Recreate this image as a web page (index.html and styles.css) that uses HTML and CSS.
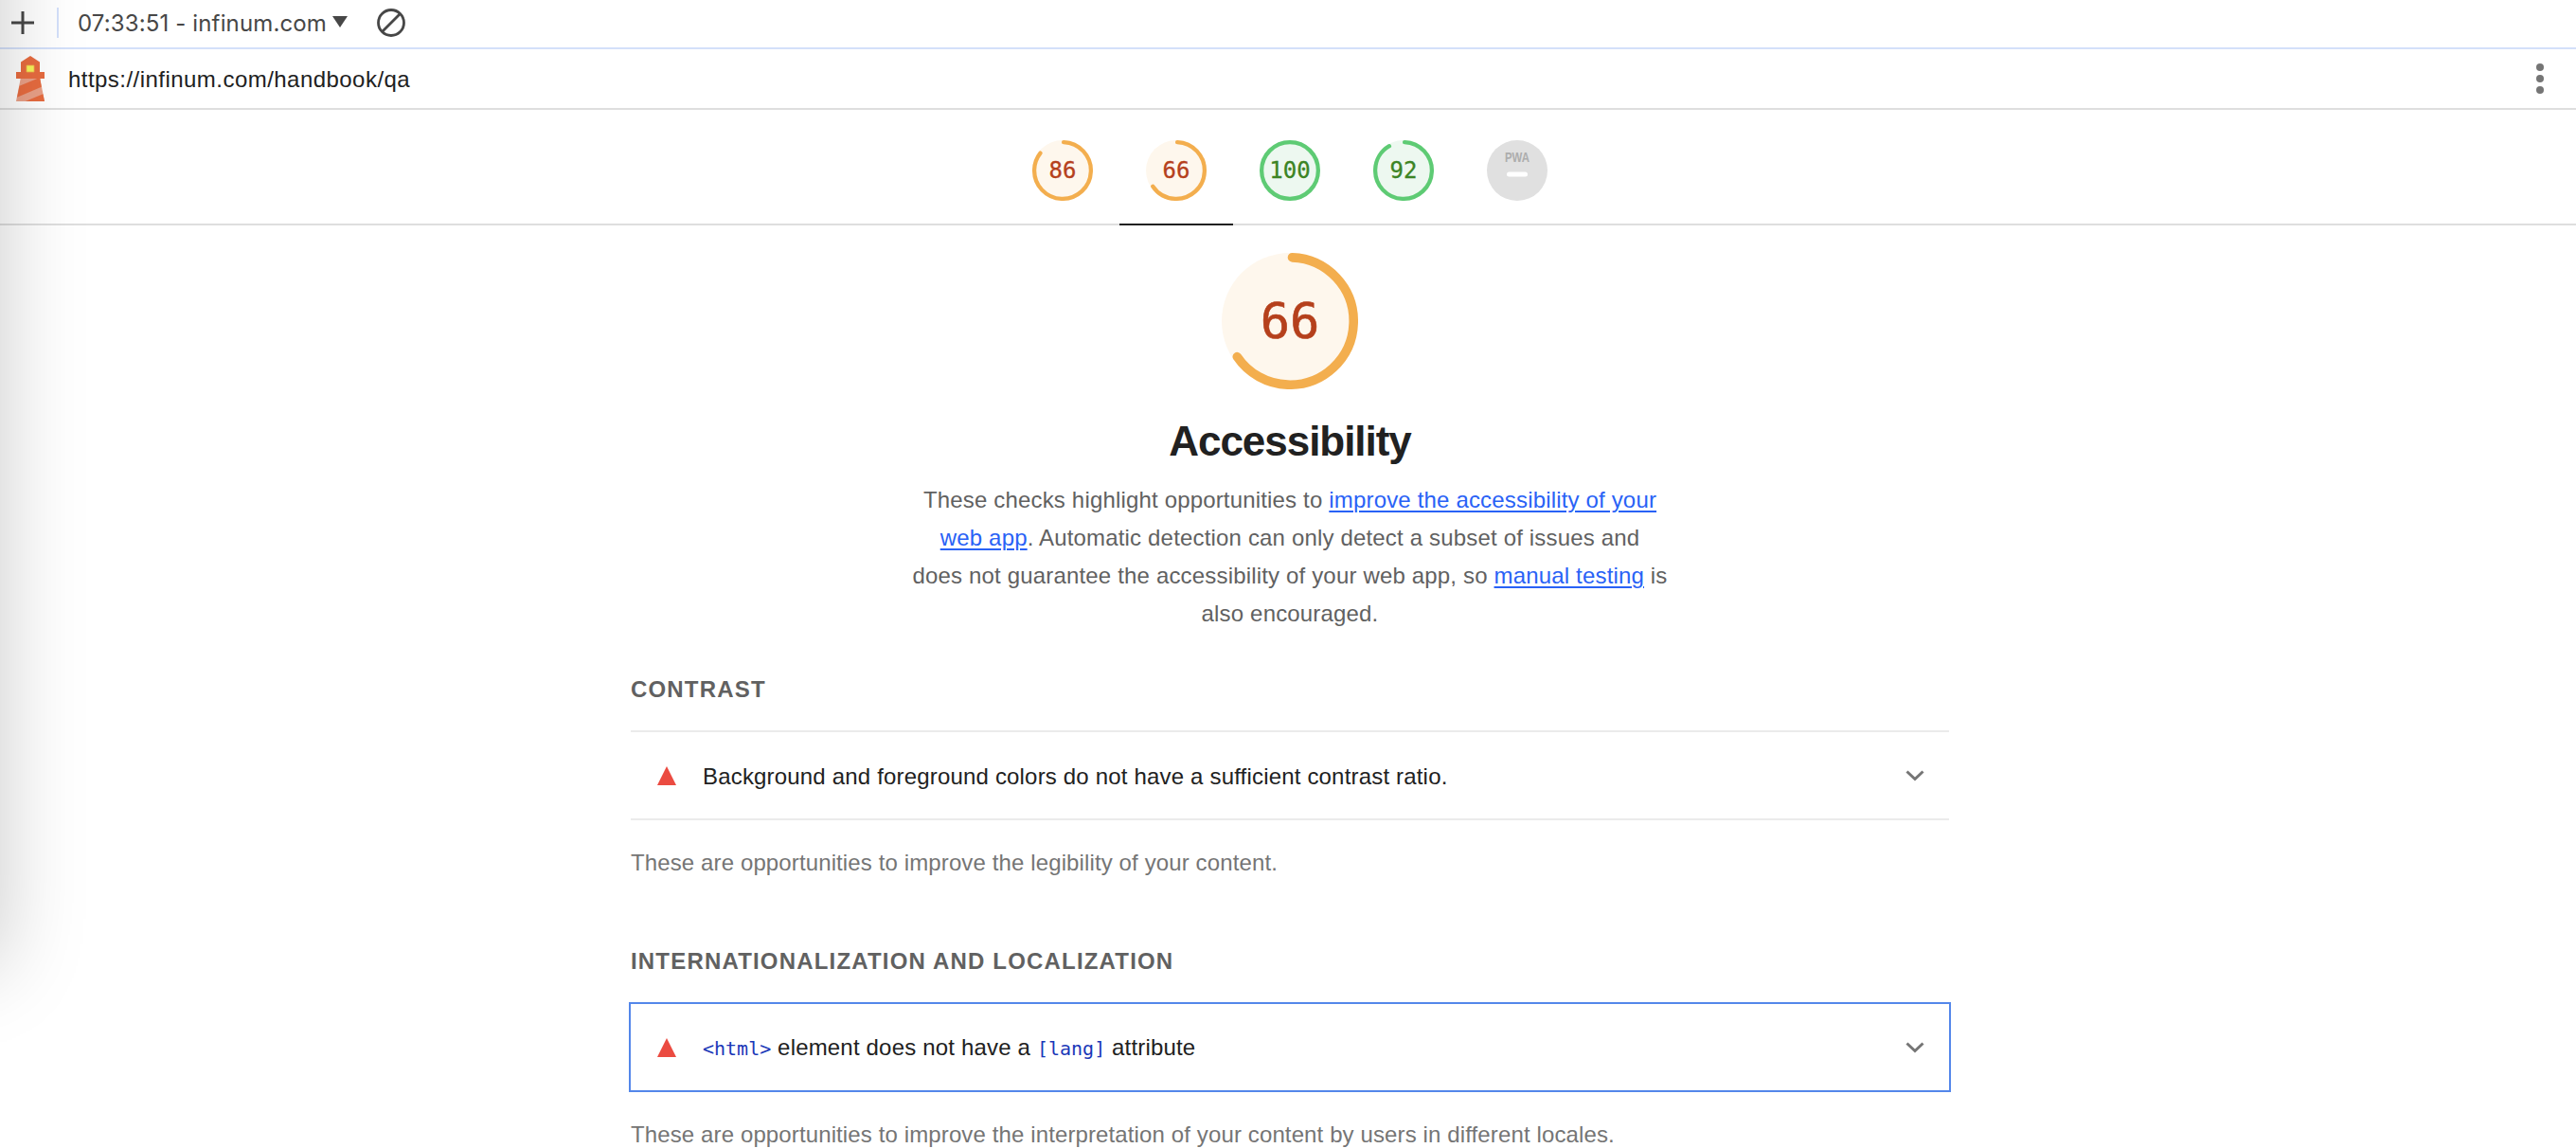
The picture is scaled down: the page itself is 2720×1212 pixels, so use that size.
FILE: index.html
```
<!DOCTYPE html>
<html lang="en">
<head>
  <meta charset="UTF-8">
  <meta name="viewport" content="width=device-width, initial-scale=1.0">
  <title>Lighthouse Report</title>
  <link rel="stylesheet" href="styles.css">
</head>
<body>

  <!-- Toolbar -->
  <div class="toolbar">
    <svg class="icon-plus" viewBox="0 0 24 24"><path d="M12 0v24M0 12h24" stroke="#474747" stroke-width="3"/></svg>
    <div class="divider"></div>
    <div class="report-select">07:33:51 - infinum.com</div>
    <svg class="icon-caret" viewBox="0 0 16 12"><path d="M0 0h16L8 12z" fill="#474747"/></svg>
    <svg class="icon-clear" viewBox="0 0 30 30">
      <circle cx="15" cy="15" r="13.5" fill="none" stroke="#474747" stroke-width="2.8"/>
      <path d="M5.5 24.5l19-19" stroke="#474747" stroke-width="2.8"/>
    </svg>
  </div>

  <!-- Topbar -->
  <div class="topbar">
    <svg class="logo" viewBox="0 0 30 48">
      <path d="M15 0l10 6.5V17H5V6.5z" fill="#e86c40"/>
      <path d="M0 17h30v7H0z" fill="#e86c40"/>
      <path d="M11 10h8v7h-8z" fill="#f7f55a" stroke="#f0b04a" stroke-width=".8"/>
      <path d="M4.7 24h20.6L30 48H0z" fill="#eaa188"/>
      <path d="M3.5 31.7L22.3 24h3l1.5 8.7L1 43.7z" fill="#e86c40"/>
      <path d="M9.7 48l18.7-7.7L30 48z" fill="#e86c40"/>
    </svg>
    <div class="url">https://infinum.com/handbook/qa</div>
    <svg class="menu" viewBox="0 0 8 32" fill="#757575">
      <circle cx="4" cy="4" r="4"/><circle cx="4" cy="16" r="4"/><circle cx="4" cy="28" r="4"/>
    </svg>
  </div>

  <!-- Score gauges -->
  <div class="scores">
    <div class="score average">
      <svg class="gauge" viewBox="0 0 120 120">
        <circle class="gauge-base" cx="60" cy="60" r="60"/>
        <circle class="gauge-arc" cx="60" cy="60" r="56" stroke-dasharray="298.6 352" transform="rotate(-87.9 60 60)"/>
      </svg>
      <span class="value">86</span>
    </div>
    <div class="score average active">
      <svg class="gauge" viewBox="0 0 120 120">
        <circle class="gauge-base" cx="60" cy="60" r="60"/>
        <circle class="gauge-arc" cx="60" cy="60" r="56" stroke-dasharray="228.2 352" transform="rotate(-87.9 60 60)"/>
      </svg>
      <span class="value">66</span>
    </div>
    <div class="score pass">
      <svg class="gauge" viewBox="0 0 120 120">
        <circle class="gauge-base" cx="60" cy="60" r="60"/>
        <circle class="gauge-arc" cx="60" cy="60" r="56"/>
      </svg>
      <span class="value">100</span>
    </div>
    <div class="score pass">
      <svg class="gauge" viewBox="0 0 120 120">
        <circle class="gauge-base" cx="60" cy="60" r="60"/>
        <circle class="gauge-arc" cx="60" cy="60" r="56" stroke-dasharray="319.7 352" transform="rotate(-87.9 60 60)"/>
      </svg>
      <span class="value">92</span>
    </div>
    <div class="score">
      <svg class="gauge" viewBox="0 0 64 64">
        <circle cx="32" cy="32" r="32" fill="#e0e0e0"/>
        <text class="pwa" x="19" y="23" textLength="26" lengthAdjust="spacingAndGlyphs">PWA</text>
        <rect x="21" y="33.5" width="22" height="5" rx="2.5" fill="#fff"/>
      </svg>
    </div>
  </div>

  <!-- Category -->
  <div class="container">
    <div class="category average">
      <div class="gauge-large">
        <svg class="gauge" viewBox="0 0 120 120">
          <circle class="gauge-base" cx="60" cy="60" r="60"/>
          <circle class="gauge-arc" cx="60" cy="60" r="56" stroke-dasharray="228.2 352" transform="rotate(-87.9 60 60)"/>
        </svg>
        <span class="value">66</span>
      </div>
      <h1>Accessibility</h1>
      <p class="description">These checks highlight opportunities to <a href="#">improve the accessibility of your web app</a>. Automatic detection can only detect a subset of issues and<br>does not guarantee the accessibility of your web app, so <a href="#">manual testing</a> is also encouraged.</p>
    </div>

    <div class="group">
      <h2>Contrast</h2>
      <div class="audit">
        <svg class="fail" viewBox="0 0 20 20"><path d="M10 0l10 20H0z" fill="#eb4b41"/></svg>
        <div class="audit-title">Background and foreground colors do not have a sufficient contrast ratio.</div>
        <svg class="chevron" viewBox="0 0 20 12"><path d="M1.5 1.5l8.5 8 8.500-8" fill="none" stroke="#757575" stroke-width="3"/></svg>
      </div>
      <p class="note">These are opportunities to improve the legibility of your content.</p>
    </div>

    <div class="group">
      <h2>Internationalization and localization</h2>
      <div class="audit focused">
        <svg class="fail" viewBox="0 0 20 20"><path d="M10 0l10 20H0z" fill="#eb4b41"/></svg>
        <div class="audit-title"><code>&lt;html&gt;</code> element does not have a <code>[lang]</code> attribute</div>
        <svg class="chevron" viewBox="0 0 20 12"><path d="M1.5 1.5l8.5 8 8.500-8" fill="none" stroke="#757575" stroke-width="3"/></svg>
      </div>
      <p class="note">These are opportunities to improve the interpretation of your content by users in different locales.</p>
    </div>
  </div>

  <div class="edge-shadow"></div>

</body>
</html>
```

FILE: styles.css
```
* {
  box-sizing: border-box;
}

body {
  margin: 0;
  height: 1212px;
  position: relative;
  overflow: hidden;
  background: #fff;
  color: #212121;
  font-family: "Liberation Sans", Arial, sans-serif;
  font-size: 24px;
  line-height: 40px;
}

svg {
  display: block;
  flex-shrink: 0;
}

.toolbar {
  display: flex;
  align-items: center;
  height: 52px;
  padding: 0 12px;
  border-bottom: 2px solid #d4e0fa;
}

.icon-plus {
  width: 24px;
  height: 24px;
  margin-top: -2px;
}

.divider {
  width: 2px;
  height: 32px;
  margin: -2px 20px 0 24px;
  background: #d4e0fa;
}

.report-select {
  width: 269px;
  color: #474747;
  font-family: Inter, sans-serif;
  letter-spacing: 0.14px;
  white-space: nowrap;
}

.icon-caret {
  width: 16px;
  height: 12px;
  margin-top: -4px;
}

.icon-clear {
  width: 30px;
  height: 30px;
  margin: -2px 0 0 31px;
}

.topbar {
  display: flex;
  align-items: center;
  height: 64px;
  padding: 0 34px 0 17px;
  border-bottom: 2px solid #dedede;
}

.logo {
  width: 30px;
  height: 48px;
}

.url {
  flex: 1;
  margin-left: 25px;
  padding-top: 1px;
  letter-spacing: 0.46px;
}

.menu {
  width: 8px;
  height: 32px;
}

.scores {
  display: flex;
  justify-content: center;
  height: 122px;
  padding-left: 4px;
  border-bottom: 2px solid #dedede;
}

.score {
  position: relative;
  display: flex;
  justify-content: center;
  width: 120px;
  height: 122px;
  padding-top: 32px;
}

.score.active {
  border-bottom: 2px solid #212121;
}

.score .gauge {
  width: 64px;
  height: 64px;
}

.gauge-arc {
  fill: none;
  stroke-width: 8;
  stroke-linecap: round;
}

.average .gauge-base {
  fill: #fef7ed;
}

.average .gauge-arc {
  stroke: #f3ae4e;
}

.average .value {
  color: #b5401c;
}

.pass .gauge-base {
  fill: #edf8f0;
}

.pass .gauge-arc {
  stroke: #5ecb74;
}

.pass .value {
  color: #3c8424;
}

/* score number over the gauge */
.value {
  position: absolute;
  top: 32px;
  left: 0;
  width: 100%;
  font-family: "DejaVu Sans Mono", monospace;
  line-height: 64px;
  text-align: center;
  -webkit-text-stroke: 0.3px;
}

.pwa {
  fill: #adadad;
  font-size: 15px;
  font-weight: bold;
}

.container {
  width: 1392px;
  margin: 29px 0 0 666px;
}

.category {
  display: flex;
  flex-direction: column;
  align-items: center;
}

.gauge-large {
  position: relative;
  width: 144px;
  height: 144px;
}

.gauge-large .value {
  top: 0;
  font-size: 52px;
  line-height: 144px;
  -webkit-text-stroke: 0.6px;
}

h1 {
  margin: 29px 0 16px;
  font-size: 44px;
  line-height: 52px;
  letter-spacing: -1.05px;
}

.description {
  width: 800px;
  margin: 0 0 40px;
  color: #616161;
  letter-spacing: 0.17px;
  text-align: center;
}

.description a {
  color: #2962f6;
  text-underline-offset: 3px;
  text-decoration-thickness: 2px;
}

.group + .group {
  margin-top: 64px;
}

h2 {
  margin: 0 0 23px;
  color: #616161;
  font-size: 24px;
  letter-spacing: 1.18px;
  text-transform: uppercase;
}

.audit {
  display: flex;
  align-items: center;
  height: 95px;
  padding: 0 26px 0 28px;
  border-top: 2px solid #ebebeb;
  border-bottom: 2px solid #ebebeb;
}

.audit.focused {
  margin: 0 -2px;
  border: 2px solid #5487ea;
}

.fail {
  width: 20px;
  height: 20px;
}

.audit-title {
  flex: 1;
  margin-left: 28px;
  padding-top: 2px;
  letter-spacing: 0.18px;
}

.audit-title code {
  color: #1a38b8;
  font-family: "DejaVu Sans Mono", monospace;
  font-size: 20px;
  letter-spacing: 0;
}

.chevron {
  width: 20px;
  height: 12px;
}

.note {
  margin: 25px 0 0;
  color: #757575;
  letter-spacing: 0.12px;
}

/* shadow of the panel to the left of the report */
.edge-shadow {
  position: absolute;
  top: -300px;
  left: -400px;
  width: 400px;
  height: 1320px;
  box-shadow: 0 0 84px rgba(0, 0, 0, 0.21);
  pointer-events: none;
}
```
